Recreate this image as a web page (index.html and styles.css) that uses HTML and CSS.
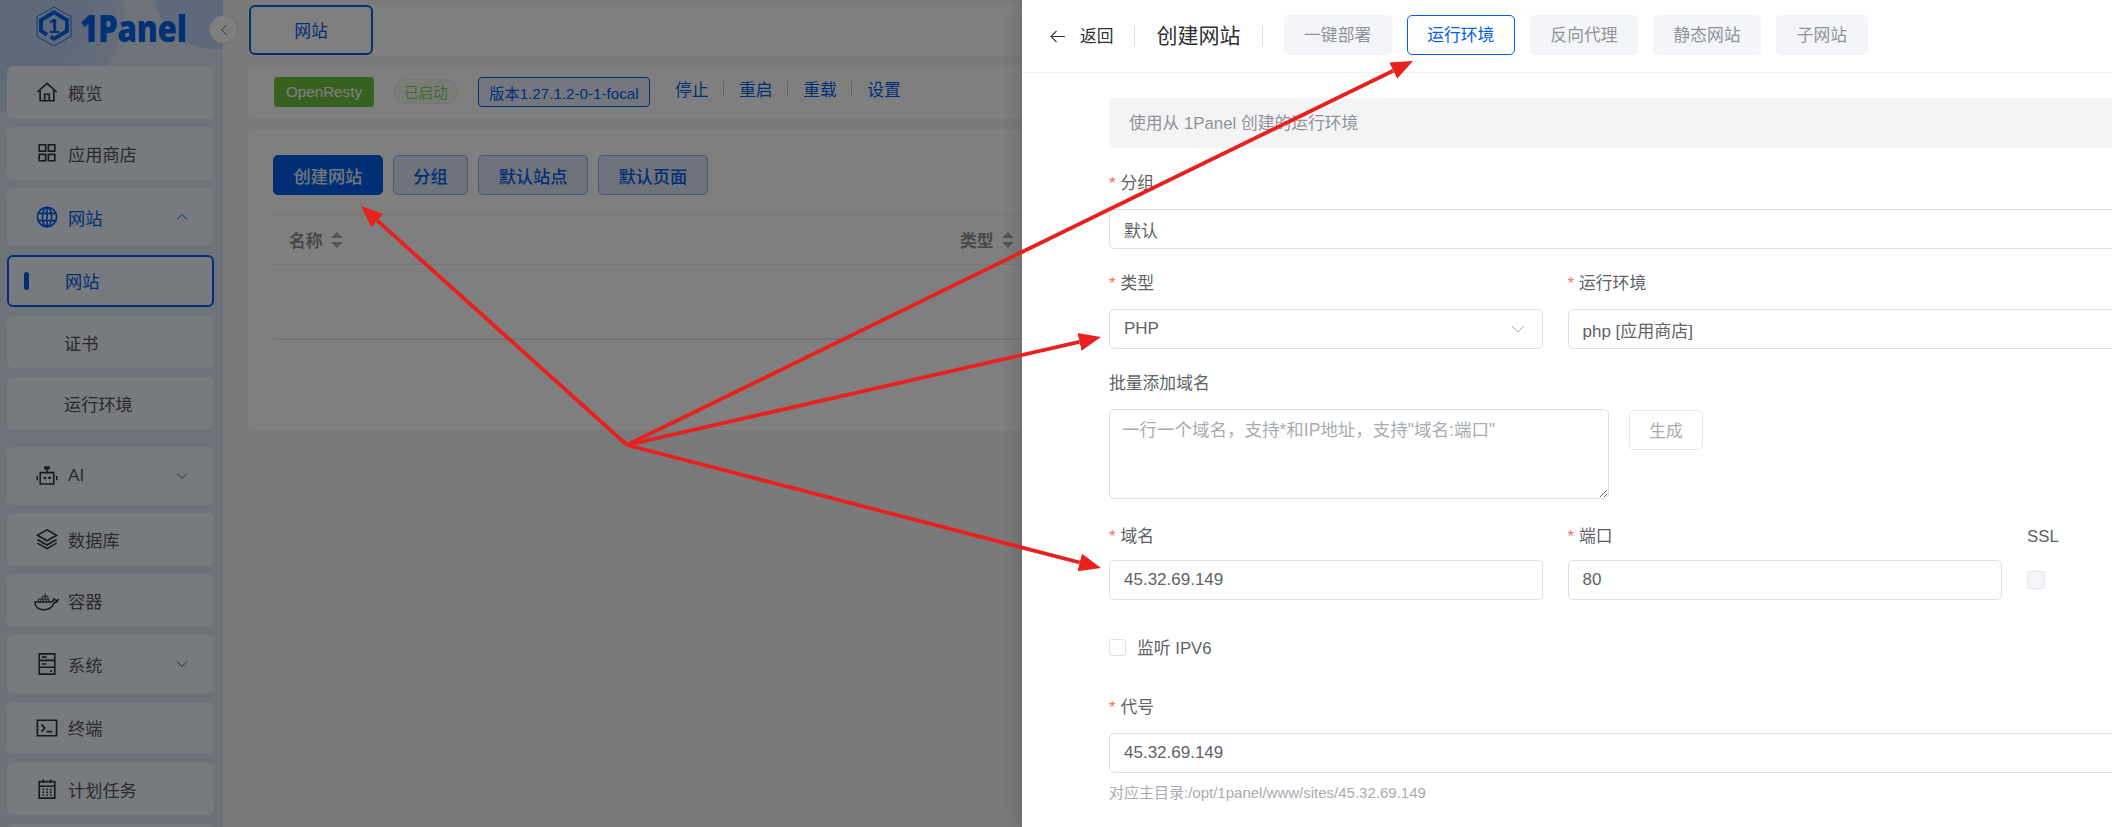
FILE: index.html
```html
<!DOCTYPE html>
<html lang="zh-CN">
<head>
<meta charset="utf-8">
<title>1Panel 网站</title>
<link rel="stylesheet" href="styles.css">
</head>
<body>
<div class="app">
  <aside class="sidebar">
    <div class="logo">
      <svg class="logo-mark" viewBox="0 0 36 41" width="36" height="41">
        <polygon points="18,1 35,10.500 35,30.500 18,40 1,30.500 1,10.500" fill="none" stroke="#0b5fd8" stroke-width=".8"/>
        <path d="M11 28.500 L5 25 V14 L18 6.300 L31 14 V25 L18 32.800 L14.500 30.800" fill="none" stroke="#0060ea" stroke-width="3.800"/>
        <text x="18" y="27" text-anchor="middle" class="logo-one">1</text>
      </svg>
      <span class="logo-text">1Panel</span>
    </div>
    <nav class="nav">
      <a class="item"><svg class="ico" viewBox="0 0 24 24"><path d="M1.500 12 12 2.500 22.500 12M4.500 10v11.500h15V10M9.500 21.500v-7h5v7"/></svg><span>概览</span></a>
      <a class="item"><svg class="ico" viewBox="0 0 24 24"><path d="M3.500 3h7v7h-7zM13.500 3h7v7h-7zM3.500 13.500h7v7h-7zM13.500 13.500h7v7h-7z"/></svg><span>应用商店</span></a>
      <a class="item item-tall item-open"><svg class="ico ico-blue" viewBox="0 0 24 24"><circle cx="12" cy="12" r="10.500"/><ellipse cx="12" cy="12" rx="5" ry="10.500"/><path d="M12 1.500v21M2 8h20M2 16h20"/></svg><span>网站</span><svg class="chev" viewBox="0 0 12 12"><path d="M1 8.500 6 3.500l5 5"/></svg></a>
      <a class="item sub active"><i class="bar"></i><span>网站</span></a>
      <a class="item sub"><span>证书</span></a>
      <a class="item sub sub-last"><span>运行环境</span></a>
      <a class="item item-tall"><svg class="ico" viewBox="0 0 26 24"><path d="M5 8h16v13.500H5zM13 8V3M10.500 1.500h5v2h-5zM1.500 12v5M24.500 12v5"/><path class="solid" d="M9 13h3v2.500H9zM14.500 13h3v2.500h-3z"/></svg><span>AI</span><svg class="chev" viewBox="0 0 12 12"><path d="M1 3.500 6 8.500l5-5"/></svg></a>
      <a class="item"><svg class="ico" viewBox="0 0 24 24"><path d="M12 2 22.500 8 12 14 1.500 8zM1.500 12.500 12 18.500l10.500-6M1.500 16.500 12 22.500l10.500-6"/></svg><span>数据库</span></a>
      <a class="item"><svg class="ico ico-wide" viewBox="0 0 26 20"><path d="M1 11h17c1.200-.2 2.400-1 2.800-3.200 1 1.500 2.700 1.700 4.200 1-.8 1.900-2.400 2.900-4.200 3C19.500 16 15.500 19 10 19 4.500 19 1 16 1 11z"/><path class="thin" d="M4.500 11V8h11v3M7.200 8v3M10 8v3M12.800 8v3M8.500 8V5h6v3M11.500 5v3M11.500 5V2"/></svg><span>容器</span></a>
      <a class="item item-tall"><svg class="ico" viewBox="0 0 24 24"><path d="M3.500 1h17v22h-17zM3.500 8h17M3.500 15.500h17M6.500 4.500h5M6.500 12h5M15.500 19.500h2"/></svg><span>系统</span><svg class="chev" viewBox="0 0 12 12"><path d="M1 3.500 6 8.500l5-5"/></svg></a>
      <a class="item"><svg class="ico" viewBox="0 0 24 24"><path d="M1.500 3.500h21v17h-21zM6 8l3.500 4L6 16M11.500 16h6"/></svg><span>终端</span></a>
      <a class="item"><svg class="ico" viewBox="0 0 24 24"><path d="M3.500 4h17v18h-17zM3.500 9h17M8 1.500v4M16 1.500v4M7 12.500h2M11 12.500h2M15 12.500h2M7 15.500h2M11 15.500h2M15 15.500h2M7 18.500h2M11 18.500h2M15 18.500h2"/></svg><span>计划任务</span></a>
      <a class="item"></a>
    </nav>
  </aside>

  <main class="main">
    <div class="card topbar"><button class="top-tab">网站</button></div>
    <div class="card status">
      <span class="tag tag-app">OpenResty</span>
      <span class="tag tag-run">已启动</span>
      <span class="tag tag-ver">版本1.27.1.2-0-1-focal</span>
      <div class="links">
        <a>停止</a><i></i><a>重启</a><i></i><a>重载</a><i></i><a>设置</a>
      </div>
    </div>
    <div class="card content">
      <div class="toolbar">
        <button class="btn btn-primary">创建网站</button>
        <button class="btn btn-light">分组</button>
        <button class="btn btn-light">默认站点</button>
        <button class="btn btn-light">默认页面</button>
      </div>
      <div class="thead">
        <div class="th th-name">名称<i class="sort"></i></div>
        <div class="th">类型<i class="sort"></i></div>
      </div>
      <div class="tbody"></div>
    </div>
  </main>
</div>

<button class="collapse"><svg viewBox="0 0 10 14" width="8" height="12"><path d="M8 1 2 7l6 6"/></svg></button>
<div class="mask"></div>

<section class="drawer">
  <header class="d-head">
    <a class="back"><svg viewBox="0 0 16 14" width="15" height="13"><path d="M7 1 1 7l6 6M1 7h15"/></svg><span>返回</span></a>
    <i class="d-div d-div-a"></i>
    <h2 class="d-title">创建网站</h2>
    <i class="d-div d-div-b"></i>
    <div class="tabs">
      <span class="tab">一键部署</span>
      <span class="tab tab-on">运行环境</span>
      <span class="tab">反向代理</span>
      <span class="tab">静态网站</span>
      <span class="tab">子网站</span>
    </div>
  </header>
  <div class="form">
    <div class="alert">使用从 1Panel 创建的运行环境</div>

    <div class="field">
      <div class="label"><b>*</b>分组</div>
      <div class="input">默认</div>
    </div>

    <div class="grid">
      <div class="field">
        <div class="label"><b>*</b>类型</div>
        <div class="input select">PHP<svg viewBox="0 0 14 8" width="14" height="8"><path d="M1 1l6 6 6-6"/></svg></div>
      </div>
      <div class="field field-wide">
        <div class="label"><b>*</b>运行环境</div>
        <div class="input">php [应用商店]</div>
      </div>
    </div>

    <div class="field">
      <div class="label">批量添加域名</div>
      <div class="batch">
        <div class="textarea">一行一个域名，支持*和IP地址，支持"域名:端口"</div>
        <button class="btn-gen">生成</button>
      </div>
    </div>

    <div class="grid grid-domain">
      <div class="field">
        <div class="label"><b>*</b>域名</div>
        <div class="input">45.32.69.149</div>
      </div>
      <div class="field">
        <div class="label"><b>*</b>端口</div>
        <div class="input">80</div>
      </div>
      <div class="field">
        <div class="label">SSL</div>
        <div class="check-wrap"><i class="check check-off"></i></div>
      </div>
    </div>

    <div class="ipv6"><i class="check"></i><span>监听 IPV6</span></div>

    <div class="field">
      <div class="label"><b>*</b>代号</div>
      <div class="input">45.32.69.149</div>
      <div class="hint">对应主目录:/opt/1panel/www/sites/45.32.69.149</div>
    </div>
  </div>
</section>

<svg class="arrows" width="2112" height="827" viewBox="0 0 2112 827">
  <defs>
    <marker id="head" markerUnits="userSpaceOnUse" markerWidth="24" markerHeight="20" refX="0" refY="10" orient="auto">
      <path d="M0 1 22 10 0 19z" fill="#e8201f"/>
    </marker>
  </defs>
  <g stroke="#e8201f" stroke-width="3.800" fill="none">
    <line x1="627" y1="445" x2="377.400" y2="220.700" marker-end="url(#head)"/>
    <line x1="627" y1="445" x2="1393.200" y2="70.700" marker-end="url(#head)"/>
    <line x1="627" y1="445" x2="1079.500" y2="341.900" marker-end="url(#head)"/>
    <line x1="627" y1="445" x2="1079.700" y2="562.500" marker-end="url(#head)"/>
  </g>
</svg>
</body>
</html>
```
FILE: styles.css
```css
* { box-sizing: border-box; }
html, body { margin: 0; height: 100%; overflow: hidden; }
body {
  font-family: "Liberation Sans", "Noto Sans CJK SC", sans-serif;
  font-size: 16.8px;
  color: #606266;
  background: #f4f4f4;
}
button { font: inherit; cursor: pointer; }
a { cursor: pointer; }

.app { display: flex; height: 827px; }

/* sidebar */
.sidebar {
  width: 223px;
  flex: none;
  padding: 0 9px 0 7px;
  background:
    radial-gradient(circle 62px at 215px -12px, #bcd3f7 0 98%, transparent 100%),
    radial-gradient(circle 105px at 20px 10px, #bcd2f4 0 60%, #ccdbf2 98%, transparent 100%),
    linear-gradient(180deg, #dde6f5 0, #dde6f3 30%, #dde5f0 100%);
  overflow: hidden;
}
.logo { height: 66px; display: flex; align-items: flex-start; padding: 6px 0 0 29px; gap: 8px; }
.logo-mark { display: block; flex: none; }
.logo-one { font-family: "Liberation Sans", sans-serif; font-weight: 700; font-size: 20px; fill: #0060ea; }
.logo-text {
  font-family: "Open Sans", sans-serif;
  font-weight: 800;
  font-size: 37px;
  line-height: 40px;
  margin-top: 2px;
  letter-spacing: -.4px;
  transform: scaleX(.85);
  transform-origin: left center;
  color: #0060ea;
}
.nav { display: flex; flex-direction: column; gap: 8.6px; font-size: 17.200px; }
.item {
  height: 52.600px;
  flex: none;
  display: flex;
  align-items: center;
  padding-left: 29px;
  border-radius: 6px;
  background: #eef4fd;
  color: #555;
  position: relative;
}
.item-tall { height: 57.600px; }
.item-open { color: #005eeb; }
.sub { padding-left: 57px; }
.sub-last { margin-bottom: 8.800px; }
.active { border: 2px solid #005eeb; color: #005eeb; padding-left: 56px; background: #eef4fd; }
.bar { position: absolute; left: 15px; top: 15px; width: 5px; height: 18px; border-radius: 3px; background: #005eeb; }
.ico { width: 22px; height: 22px; flex: none; margin-right: 10px; fill: none; stroke: #333; stroke-width: 1.800; }
.ico-blue { stroke: #005eeb; }
.ico-wide { width: 25px; margin-left: -2px; margin-right: 9px; stroke-width: 1.500; }
.thin { stroke-width: 1; }
.solid { fill: #333; stroke: none; }
.chev { position: absolute; right: 26px; top: 50%; width: 12px; height: 12px; margin-top: -6px; fill: none; stroke: #555; stroke-width: 1; }
.item-open .chev { stroke: #005eeb; }

/* main */
.main { flex: 1; min-width: 0; padding: 5px 0 0 25px; display: flex; flex-direction: column; align-items: stretch; }
.card { background: #fff; border-radius: 6px; }
.topbar { height: 51px; }
.top-tab {
  display: block;
  width: 124px;
  height: 50px;
  margin-left: 1px;
  border: 2px solid #005eeb;
  border-radius: 6px;
  background: #fff;
  color: #005eeb;
}
.status { margin-top: 9px; height: 53px; display: flex; align-items: center; padding-left: 26px; }
.tag { display: inline-flex; align-items: center; justify-content: center; font-size: 15.200px; height: 30px; border-radius: 4px; }
.tag-app { width: 100px; background: #6ec23f; color: #fff; }
.tag-run { width: 64px; height: 25px; margin-left: 20px; border-radius: 13px; background: #f2f8ee; border: 1px solid #e4f2da; color: #86d45e; font-size: 14.400px; }
.tag-ver { width: 172px; margin-left: 20px; border: 1px solid #005eeb; background: #e9effb; color: #005eeb; }
.links { display: flex; align-items: center; margin: -6px 0 0 25px; color: #005eeb; }
.links i { width: 1px; height: 15px; background: #c8c8c8; margin: 0 15px 0 14.500px; }

.content { margin-top: 12px; height: 300px; padding: 25px 25px 0; }
.toolbar { display: flex; gap: 10px; font-weight: 500; font-size: 17.200px; }
.btn { height: 40px; border-radius: 5px; padding: 0 19.500px; border: 1px solid #8fb0ea; font-weight: 500; }
.btn-primary { background: #005eeb; border-color: #005eeb; color: #e8eefb; }
.btn-light { background: #dde6f8; color: #005eeb; }
.thead {
  margin-top: 19px;
  height: 51px;
  border-top: 1px solid #eee;
  border-bottom: 1px solid #eee;
  display: grid;
  grid-template-columns: 687px 1fr;
  align-items: center;
  font-weight: 700;
  color: #909399;
}
.th { display: flex; align-items: center; font-size: 16.800px; }
.th-name { padding-left: 16px; }
.sort { display: inline-block; width: 12px; height: 16px; margin-left: 8px; position: relative; }
.sort::before, .sort::after { content: ""; position: absolute; left: 0; border: 6px solid transparent; }
.sort::before { border-bottom: 6.500px solid #a8abb2; border-top-width: 0; top: 0; }
.sort::after { bottom: 0; border-top: 6.500px solid #a8abb2; border-bottom-width: 0; }
.tbody { height: 75px; border-bottom: 2px solid #e8e8f2; }

.collapse {
  position: absolute;
  left: 209px;
  top: 15px;
  width: 29px;
  height: 29px;
  padding: 0;
  border-radius: 50%;
  border: 1px solid #e0e0e0;
  background: #fff;
  display: flex;
  align-items: center;
  justify-content: center;
}
.collapse svg { fill: none; stroke: #555; stroke-width: 1.200; }

.mask { position: absolute; inset: 0; background: rgba(0, 0, 0, .5); }

/* drawer */
.drawer {
  position: absolute;
  left: 1022px;
  top: 0;
  width: 1090px;
  height: 827px;
  background: #fff;
  overflow: hidden;
  box-shadow: -6px 0 14px rgba(0, 0, 0, .12);
}
.d-head {
  height: 73px;
  border-bottom: 1px solid #ebeef5;
  display: flex;
  align-items: center;
  padding-left: 28px;
}
.back { display: flex; align-items: center; color: #303133; font-size: 16.800px; }
.back svg { fill: none; stroke: #303133; stroke-width: 1.200; margin-right: 15px; }
.back span { margin-top: -2px; }
.d-div { width: 1px; height: 20px; background: #dcdfe6; flex: none; }
.d-div-a { margin-left: 20px; }
.d-title { margin: -5px 0 0 22px; font-weight: 400; font-size: 21px; color: #303133; }
.d-div-b { margin-left: 21px; }
.tabs { display: flex; gap: 15px; margin-left: 21px; margin-top: -2px; }
.tab {
  height: 40px;
  padding: 0 19.500px 3px;
  border: 1px solid #f4f5f9;
  border-radius: 5px;
  background: #f4f5f9;
  color: #909399;
  display: flex;
  align-items: center;
}
.tab-on { background: #fff; border-color: #005eeb; color: #005eeb; }

.form { width: 1100px; margin-left: 87px; padding-top: 25px; }
.alert {
  height: 50px;
  padding: 0 0 2px 20px;
  margin-bottom: 21px;
  display: flex;
  align-items: center;
  background: #f4f4f5;
  border-radius: 5px;
  color: #909399;
}
.field { margin-bottom: 20px; }
.label { height: 28px; line-height: 30px; margin-bottom: 12px; color: #606266; }
.label b { color: #f56c6c; font-weight: 400; margin-right: 5px; }
.input {
  height: 40px;
  padding: 0 14px;
  border: 1px solid #dcdfe6;
  border-radius: 5px;
  background: #fff;
  display: flex;
  align-items: center;
  justify-content: flex-start;
  color: #606266;
  font-size: 17px;
}
.select { justify-content: space-between; padding-right: 17px; }
.select svg { fill: none; stroke: #a8abb2; stroke-width: 1; }
.grid { display: grid; grid-template-columns: 433.500px 434.500px 1fr; column-gap: 25px; }
.field-wide { grid-column: 2 / 4; }
.batch { display: flex; align-items: flex-start; gap: 20px; }
.textarea {
  width: 500px;
  height: 90px;
  padding: 6px 12px;
  border: 1px solid #dcdfe6;
  border-radius: 5px;
  color: #a8abb2;
  font-size: 17.500px;
  resize: both;
  overflow: hidden;
}
.btn-gen {
  width: 74px;
  height: 40px;
  margin-top: 1px;
  padding: 0;
  border: 1px solid #e4e7ed;
  border-radius: 5px;
  background: #fff;
  color: #a8abb2;
}
.grid-domain { margin-top: 23px; }
.grid-domain .label { margin-bottom: 10px; }
.check-wrap { height: 40px; display: flex; align-items: center; }
.check { display: block; width: 17px; height: 17px; border: 1px solid #dcdfe6; border-radius: 3px; background: #fff; flex: none; }
.check-off { width: 18px; height: 18px; background: #f5f7fa; border-color: #e4e7ed; }
.ipv6 { height: 40px; margin: 7px 0 26px; display: flex; align-items: center; gap: 11px; }
.ipv6 span { margin-top: -1px; }
.hint { margin-top: 10px; font-size: 15px; line-height: 20px; color: #a8abb2; }

.arrows { position: absolute; left: 0; top: 0; pointer-events: none; }
```
